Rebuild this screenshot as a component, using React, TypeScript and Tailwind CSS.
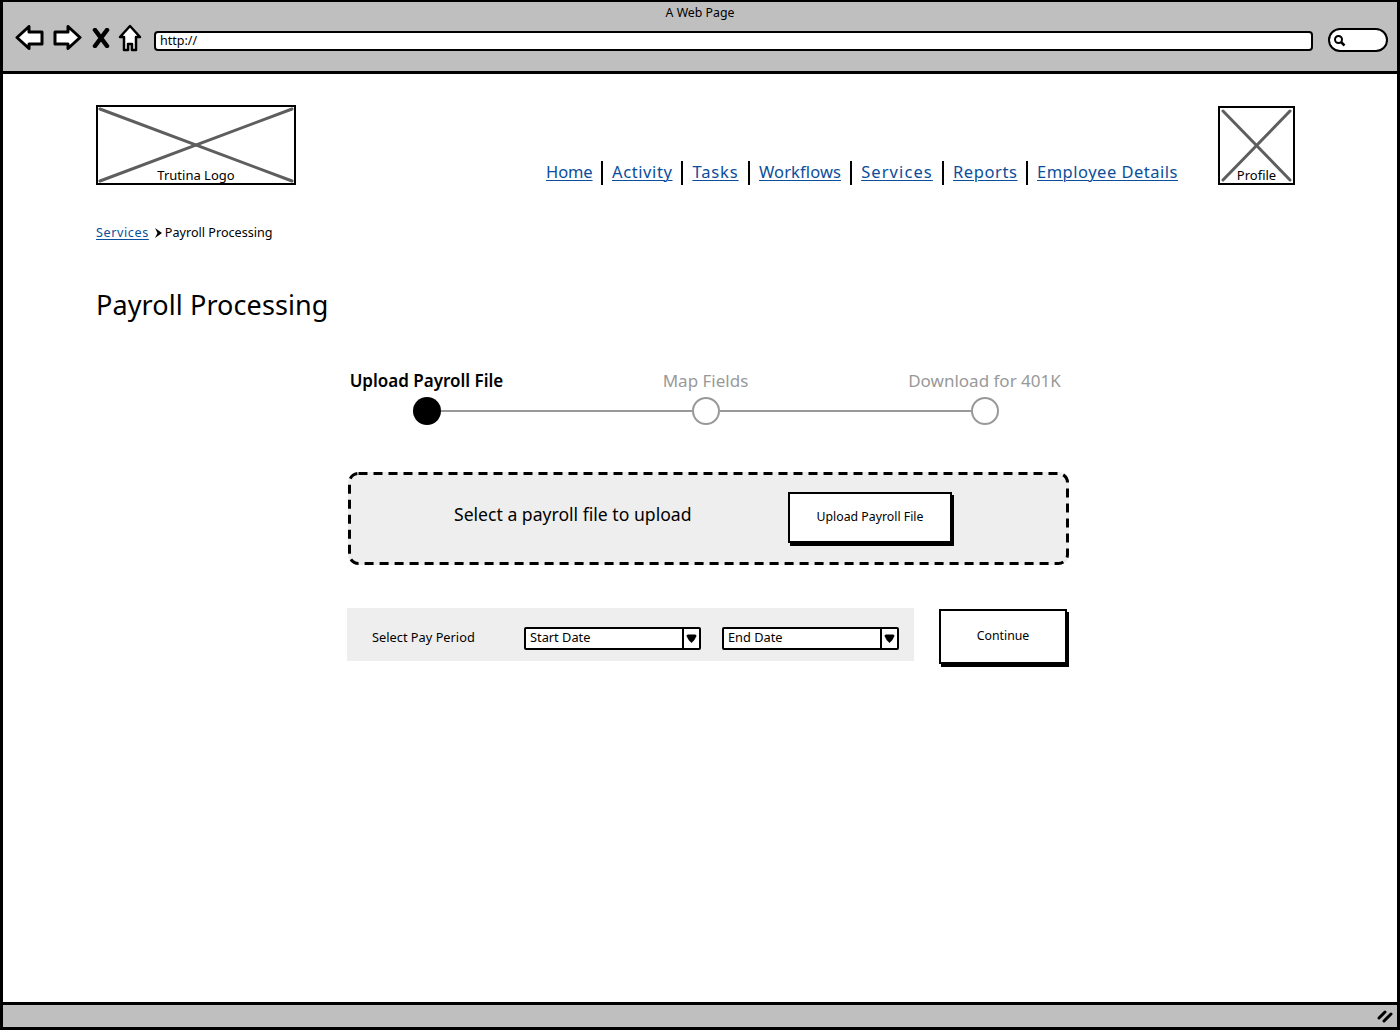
const font = { fontFamily: '"Noto Sans", Lato, sans-serif' }

const navItems = [
  { label: "Home", width: "w-[46px] tracking-[-0.1px]" },
  { label: "Activity", width: "w-[60px] tracking-[0.6px]" },
  { label: "Tasks", width: "w-[47px] tracking-[0.9px]" },
  { label: "Workflows", width: "w-[82px] tracking-[0.1px]" },
  { label: "Services", width: "w-[72px] tracking-[1.1px]" },
  { label: "Reports", width: "w-[64px] tracking-[0.6px]" },
  { label: "Employee Details", width: "w-[140px] tracking-[0.5px]" },
]

function Placeholder({ label, className, svgBox, lines }: { label: string; className: string; svgBox: string; lines: string[] }) {
  return (
    <div className={`relative border-2 border-black bg-white ${className}`}>
      <svg className="absolute inset-0 w-full h-full" viewBox={svgBox}>
        {lines.map((d) => (
          <path key={d} d={d} stroke="#5e5e5e" strokeWidth="3" fill="none" strokeLinecap="round" />
        ))}
      </svg>
      <span className="absolute left-0 right-0 bottom-[-1px] text-center text-[13px] leading-[18px] text-black">{label}</span>
    </div>
  )
}

function DateSelect({ label }: { label: string }) {
  return (
    <div className="w-[177px] h-[23px] border-2 border-black rounded-[2px] bg-white flex items-center">
      <span className="flex-1 pl-1 mb-[2px] text-[12.8px] leading-none text-black">{label}</span>
      <span className="w-[17px] h-full border-l-2 border-black flex items-center justify-center">
        <svg width="11" height="9" viewBox="0 0 11 9">
          <path d="M0.5 2 Q0.5 0.5 2 0.5 L9 0.5 Q10.5 0.5 10.5 2 Q9 6 5.5 9 Q2 6 0.5 2 Z" fill="#000" />
        </svg>
      </span>
    </div>
  )
}

function Step({ label, active }: { label: string; active?: boolean }) {
  return (
    <span className={active ? "text-black font-semibold text-[17px]" : "text-[#999999] text-[17px]"}>{label}</span>
  )
}

export default function App() {
  return (
    <div className="w-[1400px] h-[1030px] bg-white flex flex-col border-t-[2px] border-x-[3px] border-b-[3px] border-black overflow-hidden" style={font}>
      {/* Browser chrome */}
      <div className="h-[72px] shrink-0 bg-[#bfbfbf] border-b-[3px] border-black">
        <div className="text-center text-[12.3px] leading-[16px] pt-[3px] text-black h-[19px]">A Web Page</div>
        <div className="flex items-center h-[34px] pl-[12px]">
          <svg width="30" height="26" viewBox="0 0 30 26" className="mr-[7px]">
            <path d="M2 12.5 L14 1.5 L14 7 L27 7 L27 19 L14 19 L14 23.5 Z" fill="#fff" stroke="#000" strokeWidth="3" strokeLinejoin="round" />
          </svg>
          <svg width="30" height="26" viewBox="0 0 30 26" className="mr-[10px]">
            <path d="M28 12.5 L16 1.5 L16 7 L3 7 L3 19 L16 19 L16 23.5 Z" fill="#fff" stroke="#000" strokeWidth="3" strokeLinejoin="round" />
          </svg>
          <svg width="18" height="20" viewBox="0 0 18 20" className="mr-[8px]">
            <path d="M3 2 L15 18 M15 2 L3 18" stroke="#000" strokeWidth="4.5" strokeLinecap="round" />
          </svg>
          <svg width="24" height="28" viewBox="0 0 24 28" className="mr-[12px]">
            <path d="M12 2 L22 13 L18 13 L18 26 L14 26 L14 20 L10 20 L10 26 L6 26 L6 13 L2 13 Z" fill="#fff" stroke="#000" strokeWidth="2.5" strokeLinejoin="round" />
          </svg>
          <div className="w-[1159px] h-[20px] mt-[6px] bg-white border-[2.5px] border-black rounded-[4px] flex items-center pl-[4px] text-[12.5px] leading-none text-black">http://</div>
          <div className="ml-[15px] w-[60px] h-[24px] mt-[4px] bg-white border-[2.5px] border-black rounded-[12px] flex items-center pl-[3px]">
            <svg width="13" height="13" viewBox="0 0 13 13">
              <circle cx="5.5" cy="5.5" r="3.5" fill="none" stroke="#000" strokeWidth="2" />
              <path d="M8 8 L11.5 11.5" stroke="#000" strokeWidth="2.5" />
            </svg>
          </div>
        </div>
      </div>

      {/* Page */}
      <div className="flex-1 flex flex-col pl-[93px] pt-[31px]">
        <div className="flex items-end h-[80px]">
          <Placeholder
            label="Trutina Logo"
            className="w-[200px] h-[80px]"
            svgBox="0 0 196 76"
            lines={["M2 2 L194 74", "M194 2 L2 74"]}
          />
          <nav className="flex items-center ml-[250px] h-[24px] w-[631px]">
            {navItems.map((item, i) => (
              <div key={item.label} className="flex items-center">
                <a className={`${item.width} text-center whitespace-nowrap mb-[2px] text-[#0b4e9b] text-[16.5px] leading-[22px] underline underline-offset-2 decoration-1`}>{item.label}</a>
                {i < navItems.length - 1 && <span className="w-[2px] h-[24px] bg-black mx-[9px]" />}
              </div>
            ))}
          </nav>
          <Placeholder
            label="Profile"
            className="w-[77px] h-[79px] ml-[41px]"
            svgBox="0 0 73 75"
            lines={["M3 3 L70 72", "M70 3 L3 72"]}
          />
        </div>

        <div className="mt-[39px] h-[18px] flex items-center text-[12.6px] leading-[18px] text-black">
          <a className="text-[#0b4e9b] tracking-[0.6px] underline underline-offset-2 decoration-1">Services</a>
          <svg width="9" height="10" viewBox="0 0 9 10" className="ml-[5px] mr-[2px]">
            <path d="M1 0 L8 5 L1 10 L3.5 5 Z" fill="#000" />
          </svg>
          <span>Payroll Processing</span>
        </div>

        <h1 className="mt-[43px] h-[40px] text-[27px] tracking-[0.1px] leading-[40px] text-black">Payroll Processing</h1>

        {/* Stepper */}
        <div className="mt-[44px] ml-[191px] w-[837px] grid grid-cols-3 text-center h-[24px] leading-[24px]">
          <Step label="Upload Payroll File" active />
          <Step label="Map Fields" />
          <Step label="Download for 401K" />
        </div>
        <div className="mt-[4px] ml-[317px] w-[586px] flex items-center">
          <span className="w-[28px] h-[28px] rounded-full bg-black shrink-0" />
          <span className="flex-1 h-[2px] bg-[#999999]" />
          <span className="w-[28px] h-[28px] rounded-full border-2 border-[#999999] bg-white shrink-0" />
          <span className="flex-1 h-[2px] bg-[#999999]" />
          <span className="w-[28px] h-[28px] rounded-full border-2 border-[#999999] bg-white shrink-0" />
        </div>

        {/* Upload */}
        <div className="relative mt-[47px] ml-[252px] w-[721px] h-[93px] bg-[#eeeeee] rounded-[10px] flex items-center">
          <svg className="absolute inset-0 w-full h-full" viewBox="0 0 721 93">
            <rect x="1.5" y="1.5" width="718" height="90" rx="9" fill="none" stroke="#000" strokeWidth="3" strokeDasharray="9 6" />
          </svg>
          <span className="relative ml-[106px] w-[334px] text-[17.6px] text-black mt-[-9px]">Select a payroll file to upload</span>
          <button className="relative w-[164px] h-[51px] bg-white border-2 border-black shadow-[2px_3px_0_#000] text-[12.3px] text-black mt-[-2px]">Upload Payroll File</button>
        </div>

        {/* Pay period */}
        <div className="mt-[43px] ml-[251px] flex items-start">
          <div className="w-[567px] h-[53px] bg-[#eeeeee] flex items-center pl-[25px] pt-[8px]">
            <span className="w-[152px] mb-[2px] text-[12.8px] text-black">Select Pay Period</span>
            <DateSelect label="Start Date" />
            <span className="w-[21px]" />
            <DateSelect label="End Date" />
          </div>
          <button className="ml-[25px] mt-[1px] w-[128px] h-[55px] bg-white border-2 border-black shadow-[2px_3px_0_#000] text-[12.3px] text-black">Continue</button>
        </div>
      </div>

      {/* Status bar */}
      <div className="h-[25px] shrink-0 bg-[#bfbfbf] border-t-[3px] border-black flex items-center justify-end pr-[4px]">
        <svg width="16" height="14" viewBox="0 0 16 14">
          <path d="M2 9 L8 3 M7 12 L14 5" stroke="#000" strokeWidth="3" strokeLinecap="round" />
        </svg>
      </div>
    </div>
  )
}
